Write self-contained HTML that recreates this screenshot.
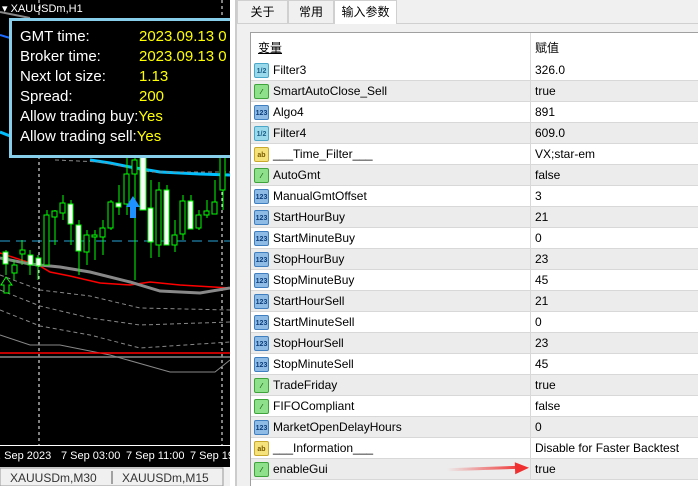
<!DOCTYPE html>
<html><head><meta charset="utf-8"><style>
*{margin:0;padding:0;box-sizing:border-box}
body{width:698px;height:486px;overflow:hidden;background:#f0f0f0;font-family:"Liberation Sans","Noto Sans CJK SC",sans-serif;position:relative}
#chart{position:absolute;left:0;top:0;width:230px;height:486px;background:#000}
.info{position:absolute;left:9px;top:18px;width:225px;height:140px;border:3px solid #87ceeb;background:#000;color:#fff;font-size:15px}
.info div{position:absolute;left:8px;white-space:nowrap}
.info span{color:#ffff00}
#right{position:absolute;left:236px;top:0;width:462px;height:486px;background:#f0f0f0;border-left:1px solid #ccc}
.tab{position:absolute;top:0;height:23px;font-size:12px;line-height:23px;text-align:center;border:1px solid #d0d0d0;border-bottom:none;background:#f0f0f0}
.tbl{position:absolute;left:13px;top:32px;width:450px;height:454px;background:#fff;border-top:1px solid #a0a0a0;border-left:1px solid #a0a0a0}
.row{position:absolute;left:0;width:450px;height:21px;font-size:12px;line-height:21px;color:#000;border-bottom:1px solid #d8d8d8}
.row.g{background:#ececec}
.row .n{position:absolute;left:22px}
.row .v{position:absolute;left:279px;border-left:1px solid #d8d8d8;padding-left:4px;height:21px;width:175px}
.ic{position:absolute;left:3px;top:3px;width:15px;height:15px;border-radius:2px;font-size:7px;line-height:15px;text-align:center;font-weight:bold}
.i1{background:#9ad8ec;border:1px solid #4aa7c8;color:#1a5f86}
.i2{background:#8fe08a;border:1px solid #3ea33a;color:#125b10}
.i3{background:#8dbbe6;border:1px solid #3f7fc0;color:#0b3d7a}
.i4{background:#f5e27a;border:1px solid #c9a92b;color:#7a5a00}
</style></head><body>
<div id="chart">
<svg width="230" height="486" style="position:absolute;left:0;top:0">
<rect width="230" height="445" fill="#000"/>
<polyline points="0,12 30,18" stroke="#888" stroke-width="2" fill="none"/>
<polyline points="0,35 10,38" stroke="#1e6cff" stroke-width="2" fill="none"/>
<polyline points="0,132 10,136" stroke="#00bfff" stroke-width="3" fill="none"/>
<polyline points="90,160 110,163 130,167 160,172 200,174 230,175" stroke="#00bfff" stroke-width="3" fill="none"/>
<polyline points="55,160 100,162 150,172 230,172" stroke="#888" stroke-dasharray="4,3" fill="none"/>
<line x1="39" y1="0" x2="39" y2="445" stroke="#fff" stroke-dasharray="3,3"/>
<line x1="222" y1="0" x2="222" y2="445" stroke="#fff" stroke-dasharray="3,3"/>
<line x1="0" y1="241" x2="230" y2="241" stroke="#29a3d8" stroke-dasharray="10,6"/>
<polyline points="0,253 40,266 50,272 70,276 100,283 130,285 150,282 180,285 230,288" stroke="#f00" stroke-width="1.5" fill="none"/>
<polyline points="0,258 30,264 60,267 90,272 130,282 160,291 200,293 230,288" stroke="#888" stroke-width="3" fill="none"/>
<polyline points="0,275 40,290 90,296 140,308 230,310" stroke="#888" stroke-dasharray="4,3" fill="none"/>
<polyline points="0,290 40,306 90,318 140,325 230,322" stroke="#888" stroke-dasharray="4,3" fill="none"/>
<polyline points="0,310 40,326 90,335 140,348 230,342" stroke="#888" stroke-dasharray="4,3" fill="none"/>
<polyline points="0,335 30,345 60,345 110,355 170,372 215,372 230,360" stroke="#888" fill="none"/>
<line x1="0" y1="353" x2="230" y2="353" stroke="#f00" stroke-width="1.5"/>
<line x1="0" y1="357" x2="230" y2="357" stroke="#888" stroke-width="1.5"/>
<g stroke="#0f0" stroke-width="1" fill="#000">
<line x1="6" y1="250" x2="6" y2="275"/><rect x="3" y="252" width="5" height="12" fill="#fff"/>
<line x1="14" y1="260" x2="14" y2="280"/><rect x="12" y="265" width="5" height="8"/>
<line x1="22" y1="240" x2="22" y2="265"/><rect x="20" y="250" width="5" height="4"/>
<line x1="30" y1="250" x2="30" y2="275"/><rect x="28" y="255" width="5" height="10" fill="#fff"/>
<line x1="38" y1="255" x2="38" y2="280"/><rect x="36" y="258" width="5" height="8" fill="#fff"/>
<line x1="47" y1="210" x2="47" y2="265"/><rect x="44" y="215" width="5" height="50"/>
<line x1="55" y1="210" x2="55" y2="245"/><rect x="52" y="211" width="5" height="6"/>
<line x1="63" y1="195" x2="63" y2="220"/><rect x="60" y="203" width="5" height="10"/>
<line x1="71" y1="200" x2="71" y2="245"/><rect x="68" y="204" width="5" height="20" fill="#fff"/>
<line x1="79" y1="220" x2="79" y2="275"/><rect x="76" y="225" width="5" height="26" fill="#fff"/>
<line x1="87" y1="230" x2="87" y2="265"/><rect x="84" y="235" width="5" height="17"/>
<line x1="95" y1="230" x2="95" y2="260"/><rect x="92" y="235" width="5" height="2"/>
<line x1="103" y1="220" x2="103" y2="255"/><rect x="100" y="228" width="5" height="9"/>
<line x1="111" y1="200" x2="111" y2="230"/><rect x="108" y="202" width="5" height="26"/>
<line x1="119" y1="185" x2="119" y2="215"/><rect x="116" y="203" width="5" height="4" fill="#fff"/>
<line x1="127" y1="150" x2="127" y2="215"/><rect x="124" y="174" width="5" height="30"/>
<line x1="135" y1="150" x2="135" y2="280"/><rect x="132" y="160" width="5" height="14"/>
<line x1="143" y1="150" x2="143" y2="210"/><rect x="140" y="150" width="6" height="60" fill="#fff"/>
<line x1="151" y1="180" x2="151" y2="258"/><rect x="148" y="208" width="5" height="34" fill="#fff"/>
<line x1="159" y1="182" x2="159" y2="257"/><rect x="156" y="190" width="5" height="55"/>
<line x1="167" y1="185" x2="167" y2="245"/><rect x="164" y="190" width="5" height="55" fill="#fff"/>
<line x1="175" y1="220" x2="175" y2="252"/><rect x="172" y="235" width="5" height="10"/>
<line x1="183" y1="195" x2="183" y2="240"/><rect x="180" y="201" width="5" height="33"/>
<line x1="191" y1="195" x2="191" y2="222"/><rect x="188" y="201" width="5" height="28" fill="#fff"/>
<line x1="199" y1="210" x2="199" y2="230"/><rect x="196" y="215" width="5" height="13"/>
<line x1="207" y1="200" x2="207" y2="218"/><rect x="204" y="211" width="5" height="4"/>
<line x1="215" y1="180" x2="215" y2="210"/><rect x="212" y="202" width="5" height="12"/>
<line x1="223" y1="140" x2="223" y2="210"/><rect x="220" y="150" width="5" height="40"/>
</g>
<path d="M133 196 L126 207 L130 207 L130 218 L136 218 L136 207 L140 207 Z" fill="#1e90ff"/>
<path d="M6 277 L1 285 L4 285 L4 293 L9 293 L9 285 L12 285 Z" fill="none" stroke="#0f0"/>
<line x1="0" y1="445.5" x2="230" y2="445.5" stroke="#fff"/>
<g fill="#fff" font-size="11" font-family="Liberation Sans,sans-serif">
<text x="-2" y="459">. Sep 2023</text><text x="61" y="459">7 Sep 03:00</text><text x="126" y="459">7 Sep 11:00</text><text x="190" y="459">7 Sep 19:00</text>
</g>
<rect x="0" y="467" width="230" height="19" fill="#f0f0f0"/>
<rect x="0" y="468" width="223" height="18" fill="#f0f0f0" stroke="#999"/>
<g fill="#333" font-size="12" font-family="Liberation Sans,sans-serif"><text x="10" y="482">XAUUSDm,M30</text><text x="122" y="482">XAUUSDm,M15</text></g>
<line x1="112" y1="471" x2="112" y2="484" stroke="#555"/>
</svg>
<div style="position:absolute;left:2px;top:2px;color:#fff;font-size:11px">▾ XAUUSDm,H1</div>
<div class="info">
<div style="top:7px">GMT time:</div><div style="top:27px">Broker time:</div><div style="top:47px">Next lot size:</div><div style="top:67px">Spread:</div><div style="top:87px">Allow trading buy:<span>Yes</span></div><div style="top:107px">Allow trading sell:<span>Yes</span></div>
<div style="top:7px;left:127px"><span>2023.09.13 0</span></div><div style="top:27px;left:127px"><span>2023.09.13 0</span></div><div style="top:47px;left:127px"><span>1.13</span></div><div style="top:67px;left:127px"><span>200</span></div>
</div>
</div>
<div style="position:absolute;left:230px;top:0;width:6px;height:486px;background:#fff;border-right:1px solid #ccc"></div>
<div id="right">
<div style="position:absolute;left:0;top:23px;width:462px;border-top:1px solid #d0d0d0"></div>
<div class="tab" style="left:0;width:51px">关于</div>
<div class="tab" style="left:51px;width:46px">常用</div>
<div class="tab" style="left:97px;width:63px;background:#fff;height:24px">输入参数</div>
<div class="tbl">
<div style="position:absolute;left:7px;top:6px;font-size:12px;text-decoration:underline">变量</div>
<div style="position:absolute;left:279px;top:0;height:27px;border-left:1px solid #ddd;padding:6px 0 0 4px;font-size:12px">赋值</div>
<div id="rows"></div>
</div>
</div>
<div style="position:absolute;left:447px;top:467px;width:75px;height:3px;background:linear-gradient(90deg,rgba(255,60,60,0),#f03030);transform:rotate(-2deg)"></div>
<div style="position:absolute;left:515px;top:462px;width:0;height:0;border-left:14px solid #f03030;border-top:6px solid transparent;border-bottom:6px solid transparent;transform:rotate(-2deg)"></div>
<script>
var d=[["i1","1/2","Filter3","326.0"],["i2","⁄","SmartAutoClose_Sell","true"],["i3","123","Algo4","891"],["i1","1/2","Filter4","609.0"],["i4","ab","___Time_Filter___","VX;star-em"],["i2","⁄","AutoGmt","false"],["i3","123","ManualGmtOffset","3"],["i3","123","StartHourBuy","21"],["i3","123","StartMinuteBuy","0"],["i3","123","StopHourBuy","23"],["i3","123","StopMinuteBuy","45"],["i3","123","StartHourSell","21"],["i3","123","StartMinuteSell","0"],["i3","123","StopHourSell","23"],["i3","123","StopMinuteSell","45"],["i2","⁄","TradeFriday","true"],["i2","⁄","FIFOCompliant","false"],["i3","123","MarketOpenDelayHours","0"],["i4","ab","___Information___","Disable for Faster Backtest"],["i2","⁄","enableGui","true"]];
var h="";d.forEach(function(r,i){h+='<div class="row'+(i%2?' g':'')+'" style="top:'+(27+21*i)+'px"><div class="ic '+r[0]+'">'+r[1]+'</div><span class="n">'+r[2]+'</span><span class="v">'+r[3]+'</span></div>';});
document.getElementById("rows").innerHTML=h;
</script>
</body></html>
